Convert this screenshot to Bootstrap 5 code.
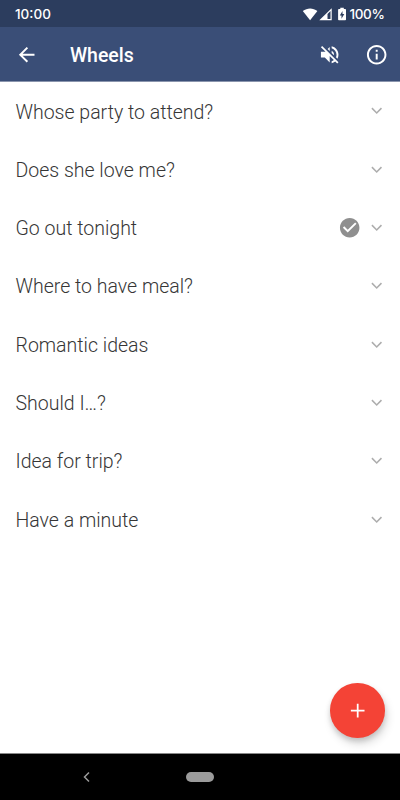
<!DOCTYPE html>
<html lang="en">
<head>
<meta charset="utf-8">
<meta name="viewport" content="width=device-width, initial-scale=1">
<title>Wheels</title>
<link href="https://cdn.jsdelivr.net/npm/bootstrap@5.3.0/dist/css/bootstrap.min.css" rel="stylesheet">
<style>
body { font-family: Roboto, "Liberation Sans", sans-serif; background: #fff; }
svg { display: block; flex: none; fill: currentColor; }
.screen { height: 800px; width: 400px; }
.status-bar { height: 27px; background: #2c3d5e; font-family: Inter, Roboto, sans-serif; font-weight: 500; font-size: 13.5px; padding: 2px 15.5px 0 15px; line-height: 1; }
.charge { letter-spacing: -.35px; margin-left: 2.5px; }
.app-bar { height: 55px; background: #3a4e77; border-bottom: 1px solid #8a95ad; padding: 1px 12px 0 15px; }
.app-title { font-size: 19.5px; font-weight: 500; line-height: 1; margin-left: 31.5px; padding-top: 2px; }
.speaker { margin-right: 23.3px; }
.wheel-row { height: 58.3px; padding: 0 12px 0 15.5px !important; background: transparent; }
.wheel-name { font-size: 19.5px; font-weight: 300; color: #363636; line-height: 1; padding-top: 2.4px; }
.picked { color: #8f8f8f; margin-right: 3.5px; }
.fab { width: 54.5px; height: 54.5px; background: #f44336; right: 15.5px; bottom: 15.5px; box-shadow: 0 3px 5px rgba(0,0,0,.14), 2px 6px 10px rgba(0,0,0,.14); }
.nav-bar { height: 47px; background: #000; border-top: 1px solid #888; padding-left: 82px; }
.home-pill { width: 28px; height: 10px; background: #9b9b9b; margin-left: 95px; }
</style>
</head>
<body>
<div class="screen d-flex flex-column overflow-hidden">
  <div class="status-bar d-flex align-items-center text-white">
    <span>10:00</span>
    <svg class="ms-auto" width="45" height="15" viewBox="0 0 45 15">
      <path d="M.8 4.1C5.2.5 11 .5 15.400 4.100L8.100 13.200z"/>
      <path fill-rule="evenodd" d="M29.700 1.300V13.200H17.300zM25.500 7.100V12H28.500V4z"/>
      <path fill-rule="evenodd" d="M38.300 2V.8h3.500V2h1.400q.8 0 .8.8v9.700q0 .8-.8.8h-6.300q-.8 0-.8-.8V2.800q0-.8.8-.8zM40.500 3.900L37.800 8.400h1.700v3.400l2.800-4.700h-1.800z"/>
    </svg>
    <span class="charge">100%</span>
  </div>

  <nav class="app-bar d-flex align-items-center text-white">
    <svg width="23.4" height="23.4" viewBox="0 0 24 24"><path d="M20 11H7.830l5.590-5.590L12 4l-8 8 8 8 1.410-1.410L7.830 13H20v-2z"/></svg>
    <h1 class="app-title mb-0">Wheels</h1>
    <svg class="speaker ms-auto" width="23.4" height="23.4" viewBox="0 0 24 24"><path d="M16.5 12c0-1.770-1.020-3.290-2.500-4.030v2.210l2.450 2.450c.03-.2.05-.41.05-.63zm2.500 0c0 .94-.2 1.820-.54 2.640l1.510 1.510C20.630 14.910 21 13.500 21 12c0-4.280-2.990-7.860-7-8.770v2.060c2.890.86 5 3.540 5 6.710zM4.270 3L3 4.270 7.730 9H3v6h4l5 5v-6.730l4.250 4.250c-.67.52-1.420.93-2.250 1.180v2.060c1.380-.31 2.630-.95 3.690-1.810L19.730 21 21 19.730l-9-9L4.270 3zM12 4L9.910 6.090 12 8.180V4z"/></svg>
    <svg width="23.4" height="23.4" viewBox="0 0 24 24"><path d="M11 7h2v2h-2zm0 4h2v6h-2zm1-9C6.480 2 2 6.480 2 12s4.480 10 10 10 10-4.480 10-10S17.520 2 12 2zm0 18c-4.410 0-8-3.590-8-8s3.590-8 8-8 8 3.590 8 8-3.590 8-8 8z"/></svg>
  </nav>

  <main class="flex-grow-1 position-relative">
    <svg class="d-none"><symbol id="chevron" viewBox="0 0 24 24"><path d="M7.100 9.400L12 14.300L16.900 9.400" fill="none" stroke="#adadad" stroke-width="1.600"/></symbol></svg>
    <div class="list-group list-group-flush">
      <div class="wheel-row list-group-item border-0 d-flex align-items-center"><span class="wheel-name me-auto">Whose party to attend?</span><svg width="23.4" height="23.4"><use href="#chevron"/></svg></div>
      <div class="wheel-row list-group-item border-0 d-flex align-items-center"><span class="wheel-name me-auto">Does she love me?</span><svg width="23.4" height="23.4"><use href="#chevron"/></svg></div>
      <div class="wheel-row list-group-item border-0 d-flex align-items-center"><span class="wheel-name me-auto">Go out tonight</span>
        <svg class="picked" width="23.4" height="23.4" viewBox="0 0 24 24"><path d="M12 2C6.480 2 2 6.480 2 12s4.480 10 10 10 10-4.480 10-10S17.520 2 12 2zm-2 15l-5-5 1.410-1.410L10 14.170l7.590-7.590L19 8l-9 9z"/></svg>
        <svg width="23.4" height="23.4"><use href="#chevron"/></svg></div>
      <div class="wheel-row list-group-item border-0 d-flex align-items-center"><span class="wheel-name me-auto">Where to have meal?</span><svg width="23.4" height="23.4"><use href="#chevron"/></svg></div>
      <div class="wheel-row list-group-item border-0 d-flex align-items-center"><span class="wheel-name me-auto">Romantic ideas</span><svg width="23.4" height="23.4"><use href="#chevron"/></svg></div>
      <div class="wheel-row list-group-item border-0 d-flex align-items-center"><span class="wheel-name me-auto">Should I…?</span><svg width="23.4" height="23.4"><use href="#chevron"/></svg></div>
      <div class="wheel-row list-group-item border-0 d-flex align-items-center"><span class="wheel-name me-auto">Idea for trip?</span><svg width="23.4" height="23.4"><use href="#chevron"/></svg></div>
      <div class="wheel-row list-group-item border-0 d-flex align-items-center"><span class="wheel-name me-auto">Have a minute</span><svg width="23.4" height="23.4"><use href="#chevron"/></svg></div>
    </div>
    <button type="button" class="fab btn border-0 rounded-circle p-0 position-absolute d-flex align-items-center justify-content-center text-white" aria-label="Add wheel">
      <svg width="23.4" height="23.4" viewBox="0 0 24 24"><path d="M19 12.900h-6.100v6.100h-1.800v-6.100H5v-1.800h6.100V5h1.800v6.100h6.100v1.800z"/></svg>
    </button>
  </main>

  <footer class="nav-bar d-flex align-items-center">
    <svg width="9" height="12" viewBox="0 0 9 12"><path d="M7 1.500L2.500 6L7 10.500" fill="none" stroke="#9b9b9b" stroke-width="1.500"/></svg>
    <span class="home-pill rounded-pill"></span>
  </footer>
</div>
<script src="https://cdn.jsdelivr.net/npm/bootstrap@5.3.0/dist/js/bootstrap.bundle.min.js"></script>
</body>
</html>
